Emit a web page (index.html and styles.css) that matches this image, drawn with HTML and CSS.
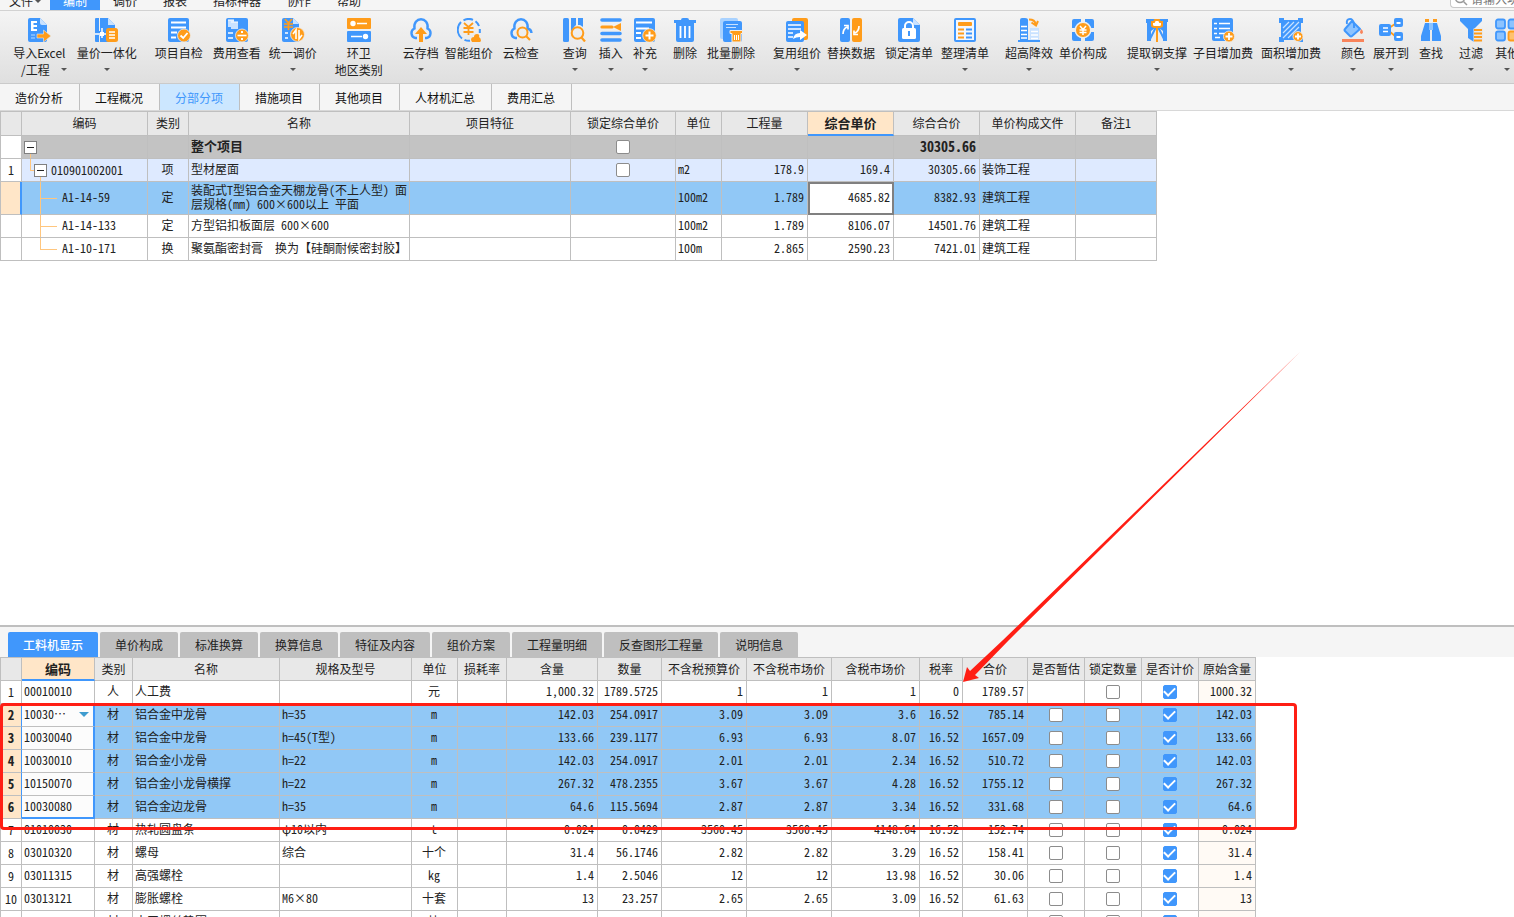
FILE: index.html
```html
<!DOCTYPE html>
<html lang="zh-CN">
<head>
<meta charset="utf-8">
<title>分部分项</title>
<link rel="stylesheet" href="styles.css">
</head>
<body>
<header class="menubar">
  <nav class="menu">
    <button class="menu-item file">文件<i class="caret"></i></button>
    <button class="menu-item active">编制</button>
    <button class="menu-item">调价</button>
    <button class="menu-item">报表</button>
    <button class="menu-item">指标神器</button>
    <button class="menu-item">协作</button>
    <button class="menu-item">帮助</button>
  </nav>
  <label class="search">
    <svg width="14" height="14" viewBox="0 0 14 14" fill="none" stroke="#999" stroke-width="1.5"><circle cx="6" cy="6" r="4.5"/><path d="M9.5 9.500l3.500 3.500"/></svg>
    <input type="text" placeholder="请输入功能名称" aria-label="搜索">
  </label>
</header>

<div class="ribbon">
  <button class="tool"><svg viewBox="0 0 24 24"><path class="b" d="M3 0h10l7 7v15q0 2-2 2H3q-2 0-2-2V2q0-2 2-2z"/><path fill="#c9e2ff" d="M13 0l7 7h-5q-2 0-2-2z"/><path class="w" d="M4 3h6v2H6.500v2H10v2H6.500v2H10v2H4z"/><path fill="none" stroke="#8cc3ff" stroke-width="1.500" d="M4 17h4M4 20h4"/><path fill="#ff9c1a" stroke="#e5e9ee" stroke-width=".6" d="M10 16h6.500v-4l7.500 6-7.500 6v-4H10z"/></svg><span>导入Excel</span><span class="second wide">/工程<i class="caret"></i></span></button>
  <button class="tool g10"><svg viewBox="0 0 24 24"><path class="b" d="M1 0h3v13h1V0h8l7 7v5h-5v12H5v-7H4v7H1q-1 0-1-1V1q0-1 1-1z"/><path fill="#c9e2ff" d="M13 0l7 7h-7z"/><path class="ws" stroke-width="1.500" d="M0 16h11M7 10v10"/><path class="w" d="M5 14h4v4H5z"/><rect class="o" x="11" y="10" width="12" height="14" rx="2.500"/><path class="ws" stroke-width="1.500" d="M14 14h6M14 17h6M14 20h6"/></svg><span>量价一体化</span><span class="second"><i class="caret"></i></span></button>
  <button class="tool g18"><svg viewBox="0 0 24 24"><rect class="b" x="1" width="21" height="24" rx="2"/><path class="ws" stroke-width="1.800" d="M4 4.500h15M4 9.500h15M4 14.500h6M4 19.500h5"/><circle class="o" cx="17" cy="17.500" r="6.500" stroke="#eee" stroke-width=".8"/><path class="ws" stroke-width="1.800" d="M13.500 17.500l2.700 2.500 4.300-5"/></svg><span>项目自检</span></button>
  <button class="tool g10"><svg viewBox="0 0 24 24"><rect class="b" x="1" width="22" height="24" rx="2"/><path fill="#c9e2ff" d="M3 2h6v2h4v7H6V9H3z"/><path class="ws" stroke-width="1" d="M3 2h6M6 4h7"/><path class="ws" stroke-width="1.600" d="M3 15h5M3 20h5"/><circle class="o" cx="17" cy="17.500" r="6.500" stroke="#eee" stroke-width=".8"/><path class="ws" stroke-width="1.600" d="M12.500 17.500h9"/><path class="w" d="M16 13h2v2h-2zM16 20h2v2h-2z"/></svg><span>费用查看</span></button>
  <button class="tool g8"><svg viewBox="0 0 24 24"><path class="b" d="M3 0h9l6 6v18H3q-2 0-2-2V2q0-2 2-2z"/><path fill="#c9e2ff" d="M12 0l6 6h-6z"/><path class="os" stroke-width="1.700" d="M4 1l3.500 4L11 1M3 6h9M3 9h9M7.500 5v7"/><path class="ws" stroke-width="1.500" d="M4 15h3M4 20h3"/><circle class="o" cx="16.500" cy="16.500" r="7" stroke="#eee" stroke-width=".8"/><path class="ws" stroke-width="1.600" d="M15 21v-9l-3 4M18 12v9l3-4"/></svg><span>统一调价</span><span class="second"><i class="caret"></i></span></button>
  <button class="tool g18"><svg viewBox="0 0 24 24"><rect class="o" width="24" height="11" rx="1"/><rect class="b" y="13" width="24" height="11" rx="1"/><circle class="w" cx="6" cy="5.500" r="2.700"/><circle class="w" cx="18.500" cy="18.500" r="2.700"/><path class="ws" stroke-width="1.600" d="M10 5.500h10M4 18.500h11"/></svg><span>环卫</span><span class="second">地区类别</span></button>
  <button class="tool g20"><svg viewBox="0 0 24 24"><path class="bs" stroke-width="2.400" d="M8 20H6.500A5 5 0 0 1 5.500 10.500C4.500 5 8 1.300 12 1.300S19.500 5 18.500 10.500A5 5 0 0 1 17.500 20H16"/><path class="o" d="M12 9l6 7h-4v8h-4v-8H6z"/></svg><span>云存档</span><span class="second"><i class="caret"></i></span></button>
  <button class="tool g6"><svg viewBox="0 0 24 24"><path class="bs" stroke-width="2" d="M5 20.500A11 11 0 0 1 4 4M6.500 2.300A11 11 0 0 1 16 1.800M18.500 3.200A11 11 0 0 1 22 8M22.800 11v4M7.500 21.800A11 11 0 0 0 13 22.800"/><path class="os" stroke-width="1.800" d="M7 5l4.500 4L16 5M6.500 10h10M6.500 14h10M11.500 9v8"/><path class="o" d="M14 22q0-3 3-3 0-3 3-3t2 3q2 1 2 4l-1 1h-8z"/></svg><span>智能组价</span></button>
  <button class="tool g10"><svg viewBox="0 0 24 24"><path class="bs" stroke-width="2.400" d="M8 20H6.500A5 5 0 0 1 5.500 10.500C4.500 5 8 1.300 12 1.300S19.500 5 18.500 10.500A5 5 0 0 1 22.500 15"/><circle class="os" cx="13.500" cy="14.500" r="5" stroke-width="2"/><path class="os" stroke-width="2.200" d="M17 18l4 4"/></svg><span>云检查</span></button>
  <button class="tool g24"><svg viewBox="0 0 24 24"><rect class="b" x="0" width="6" height="24" rx="1.500"/><path class="b" d="M8 0h5v7q-3 2-3 5l-2 1zM15 0h5v9l-3-2h-2z"/><circle class="os" cx="14.500" cy="15" r="5.800" stroke-width="2"/><path class="os" stroke-width="2.200" d="M18.500 19.500l3.500 4"/></svg><span>查询</span><span class="second"><i class="caret"></i></span></button>
  <button class="tool g12"><svg viewBox="0 0 24 24"><path class="bs" stroke-width="3.600" stroke-linecap="round" d="M3 2h18M3 15.500h18M3 22h18"/><path class="os" stroke-width="3.200" stroke-linecap="round" d="M3 9h10"/><path class="o" d="M22 5v8l-8-4z"/></svg><span>插入</span><span class="second"><i class="caret"></i></span></button>
  <button class="tool g10"><svg viewBox="0 0 24 24"><rect class="b" x="1" width="21" height="24" rx="2"/><path class="ws" stroke-width="1.800" d="M3 4.500h16M3 10.500h13M3 15h5M3 20h5"/><circle class="o" cx="16.500" cy="17.500" r="6.800" stroke="#eee" stroke-width=".8"/><path class="ws" stroke-width="2" d="M12.500 17.500h8M16.500 13.500v8"/></svg><span>补充</span><span class="second"><i class="caret"></i></span></button>
  <button class="tool g16"><svg viewBox="0 0 24 24"><path class="b" d="M1 2h7q0-2 2-2h4q2 0 2 2h7v3H1zM3 5h18v17q0 2-2 2H5q-2 0-2-2z"/><path class="ws" stroke-width="1.800" d="M7.500 8v12M12 8v12M16.500 8v12"/></svg><span>删除</span></button>
  <button class="tool g10"><svg viewBox="0 0 24 24"><rect fill="#a9d2ff" x="1" width="18" height="21" rx="2"/><rect class="b" x="4" y="3" width="19" height="21" rx="2"/><path fill="none" stroke="#c9e2ff" stroke-width="1.200" d="M7 6.500h12M7 9.500h10"/><path fill="#ff9c1a" stroke="#eee" stroke-width="1" d="M11 12.500h12.500v3H22v8.500H13v-8.500h-2z"/><path class="ws" stroke-width="1" d="M15.500 17v5M17.500 17v5M19.500 17v5"/></svg><span>批量删除</span><span class="second"><i class="caret"></i></span></button>
  <button class="tool g18"><svg viewBox="0 0 24 24"><rect class="o" x="7" width="16" height="22" rx="2"/><rect class="b" x="1" y="3" width="18" height="21" rx="2"/><path class="ws" stroke-width="1.600" d="M3 7h13M3 11h13M3 15h5M3 19h5"/><path class="w" d="M8 21q1-6 7-6v-3l7 5-7 5v-3q-4 0-7 2z"/></svg><span>复用组价</span><span class="second"><i class="caret"></i></span></button>
  <button class="tool g6"><svg viewBox="0 0 24 24"><rect class="b" x="1" width="10" height="24" rx="2"/><rect class="o" x="13" width="10" height="24" rx="2"/><path class="ws" stroke-width="1.700" d="M4 16q0-5 4-7M5 7.500h4v4M20 8q0 5-4 7M19 16.500h-4v-4"/></svg><span>替换数据</span></button>
  <button class="tool g10"><svg viewBox="0 0 24 24"><path class="b" d="M3 0h13l7 7v15q0 2-2 2H3q-2 0-2-2V2q0-2 2-2z"/><path fill="#c9e2ff" d="M16 0l7 7h-5q-2 0-2-2z"/><rect class="w" x="5" y="10" width="14" height="11" rx="1.500"/><path class="ws" stroke-width="2" d="M8 11V8a4 4 0 0 1 8 0v3"/><path class="b" d="M11 13h2v5h-2z"/></svg><span>锁定清单</span></button>
  <button class="tool g8"><svg viewBox="0 0 24 24"><rect class="b" x="1" width="22" height="24" rx="2"/><path fill="#f4f7fb" d="M3 2h18v20H3z"/><rect class="o" x="5" y="4" width="14" height="4" rx="1"/><path class="os" stroke-width="2" d="M5 11.500h6M5 15.500h6M5 19.500h6"/><path class="bs" stroke-width="2" d="M13 11.500h6M13 15.500h6M13 19.500h6"/></svg><span>整理清单</span><span class="second"><i class="caret"></i></span></button>
  <button class="tool g16"><svg viewBox="0 0 24 24"><path class="b" d="M3 22V2q0-2 2-2h3q3 0 3 2v20h12v2H1v-2z"/><path fill="#c9e2ff" d="M13 10h9v12h-9z"/><path class="ws" stroke-width="1.500" d="M4 8.500h6M4 12.500h6M4 16.500h6M4 20h6M14 13.500h7M14 17h7M14 20.500h7"/><path class="os" stroke-width="2" d="M12 1.500q6 0 6.500 4.500M14.500 4.500l4.500 3 2-4.500"/></svg><span>超高降效</span><span class="second"><i class="caret"></i></span></button>
  <button class="tool g6"><svg viewBox="0 0 24 24"><path class="b" d="M3 1h7v4h4V1h7q2 0 2 2v7h-4v4h4v7q0 2-2 2h-7v-4h-4v4H3q-2 0-2-2v-7h4v-4H1V3q0-2 2-2z"/><circle cx="12" cy="12" r="8.500" fill="#eee"/><circle class="o" cx="12" cy="12" r="7"/><path class="ws" stroke-width="1.500" d="M9 8l3 3.500L15 8M8.500 12h7M8.500 14.500h7M12 11v6"/></svg><span>单价构成</span></button>
  <button class="tool g20"><svg viewBox="0 0 24 24"><path class="b" d="M1 1h22v3h-1v19h-4V13l-4-3h-4l-4 3v10H2V5H1z"/><path class="bs" stroke-width="2" d="M11 9L5 21M13 9l6 12"/><path fill="#fff" stroke="#ff9c1a" stroke-width="2" d="M9 9L7 8V4h2l1-2h4l1 2h2v4l-2 1z"/><path class="os" stroke-width="2" d="M12 9v15"/></svg><span>提取钢支撑</span><span class="second"><i class="caret"></i></span></button>
  <button class="tool g6"><svg viewBox="0 0 24 24"><rect class="b" x="1" width="21" height="23" rx="2"/><path class="ws" stroke-width="1.600" d="M3 5.500h3M8 5.500h11M3 10.500h3M8 10.500h11M3 15.500h3M8 15.500h6M4 19.500h5"/><circle class="o" cx="18" cy="18.500" r="5.500" stroke="#eee" stroke-width=".8"/><path class="ws" stroke-width="1.800" d="M14.500 18.500h7M18 15v7"/></svg><span>子目增加费</span></button>
  <button class="tool g8"><svg viewBox="0 0 24 24"><path class="b" d="M0 0h5v2h14V0h5v5h-2v14h2v5h-5v-2H5v2H0v-5h2V5H0z"/><path fill="none" stroke="#c9e2ff" stroke-width="1.200" d="M4 10l6-6M4 15L15 4M4 20L20 4M9 20L20 9"/><circle class="o" cx="19" cy="18.500" r="5" stroke="#eee" stroke-width=".8"/><path class="ws" stroke-width="1.800" d="M16 18.500h6M19 15.500v6"/></svg><span>面积增加费</span><span class="second"><i class="caret"></i></span></button>
  <button class="tool g20"><svg viewBox="0 0 24 24"><path fill="#8cc3ff" stroke="#4097fc" stroke-width="2" stroke-linejoin="round" d="M11 3l8 8-8 7q-1 1-2 0l-5-5q-1-1 0-2z"/><path class="bs" stroke-width="2" d="M6 6q-1-5 3-5 3 0 4 5v4"/><path fill="#f9845b" d="M20.500 11q3 4 0 5-3-1 0-5zM1 21h22v3H1z"/></svg><span>颜色</span><span class="second"><i class="caret"></i></span></button>
  <button class="tool g8"><svg viewBox="0 0 24 24"><path class="os" stroke-width="1.800" d="M10 10l6-4M10 13l6 5"/><rect class="b" y="6" width="12" height="12" rx="2"/><path class="ws" stroke-width="1.500" d="M4 10h5M4 13.500h5"/><rect class="b" x="15" width="9" height="9" rx="2"/><rect class="b" x="15" y="14" width="9" height="9" rx="2"/><path class="ws" stroke-width="2" d="M17.500 5h4M17.500 19h4"/></svg><span>展开到</span><span class="second"><i class="caret"></i></span></button>
  <button class="tool g10"><svg viewBox="0 0 24 24"><path class="b" d="M6 5h4l1 7v11H2v-5zM14 5h4l4 13v5h-9V12z"/><path fill="#8cc3ff" d="M10 5h4v7h-4z"/><path class="o" d="M6 1h4v3H6zM14 1h4v3h-4z"/></svg><span>查找</span></button>
  <button class="tool g16"><svg viewBox="0 0 24 24"><path class="b" d="M1 0h22v3l-8 8v13l-6-4v-9L1 3z"/><path fill="#e8e8e8" d="M14.500 10.500H24V24h-9.500z"/><path class="os" stroke-width="1.800" d="M15 12h8M15 15.500h8M15 19h8M15 22.500h8"/></svg><span>过滤</span><span class="second"><i class="caret"></i></span></button>
  <button class="tool g12"><svg viewBox="0 0 24 24"><g fill="#8cc3ff" stroke="#4097fc" stroke-width="1.800"><rect x="1" y="1.500" width="9" height="9" rx="2"/><rect x="13.500" y="1.500" width="9" height="9" rx="2"/><rect x="1" y="13.500" width="9" height="9" rx="2"/></g><rect fill="#ffc26e" stroke="#ff9c1a" stroke-width="1.800" x="13.500" y="13.500" width="9" height="9" rx="2"/></svg><span>其他</span><span class="second"><i class="caret"></i></span></button>
</div>

<nav class="pages">
  <button>造价分析</button><button>工程概况</button><button class="active">分部分项</button><button>措施项目</button><button>其他项目</button><button>人材机汇总</button><button>费用汇总</button>
</nav>

<main class="upper">
  <table class="grid" id="bill"></table>
</main>

<section class="lower">
  <nav class="tabs">
    <button class="active">工料机显示</button><button>单价构成</button><button>标准换算</button><button>换算信息</button><button>特征及内容</button><button>组价方案</button><button>工程量明细</button><button>反查图形工程量</button><button>说明信息</button>
  </nav>
  <div class="lower-body">
    <table class="grid" id="resources"></table>
    <div class="mark"></div>
  </div>
  <svg class="arrow" width="340" height="334" viewBox="0 0 340 334"><path fill="#ff1e14" d="M338 2L47 290 13 325l4 3-16 4 4-15 3 4 33-31z"/></svg>
</section>
<script src="tables.js"></script>
</body>
</html>
```
FILE: styles.css
```css
* { box-sizing: border-box; }
:root {
  --blue: #4097fc;
  --orange: #ff9c1a;
  --line: #bfbfbf;
  --select: #91c8f6;
  --peach: #ffe6c8;
  --tree: #ffc67e;
}
body {
  margin: 0;
  height: 100vh;
  display: flex;
  flex-direction: column;
  overflow: hidden;
  background: #fff;
  color: #222;
  font: 12px/16px "Noto Sans CJK SC", sans-serif;
}
button {
  border: 0;
  padding: 0;
  background: none;
  color: inherit;
  font: inherit;
  white-space: nowrap;
}

.menubar {
  flex: none;
  display: flex;
  align-items: flex-end;
  justify-content: space-between;
  height: 11px;
  overflow: hidden;
  background: #f5f5f5;
  border-bottom: 1px solid #d2d2d2;
}
.menu { display: flex; }
.menu-item { height: 28px; padding: 11px 13px 1px; }
.menu-item.file { width: 50px; padding: 11px 9px 1px; display: flex; align-items: center; gap: 2px; }
.menu-item.active { background: var(--blue); color: #fff; }
.search {
  display: flex;
  align-items: center;
  gap: 3px;
  width: 64px;
  height: 18px;
  margin-bottom: 2px;
  padding: 0 0 0 3px;
  border: 1px solid #c8c8c8;
  border-right: 0;
  border-radius: 4px 0 0 4px;
  background: #fff;
}
.search svg { flex: none; }
.search input { width: 100%; min-width: 0; border: 0; padding: 0; outline: 0; font: inherit; }
.search input::placeholder { color: #777; }

.caret {
  flex: none;
  width: 0;
  height: 0;
  border: 3px solid transparent;
  border-top-color: #555;
  border-bottom: 0;
}

.ribbon {
  flex: none;
  display: flex;
  align-items: flex-start;
  padding: 7px 0 5px 12px;
  overflow: hidden;
  background: linear-gradient(#f4f4f4, #dfdfdf);
  border-bottom: 1px solid #cacaca;
}
.tool {
  flex: none;
  display: flex;
  flex-direction: column;
  align-items: center;
  line-height: 17px;
}
.tool svg { width: 24px; height: 24px; margin-bottom: 2px; }
.second { display: flex; align-items: center; justify-content: center; height: 17px; }
.second.wide { gap: 11px; padding-left: 9px; }
.g6 { margin-left: 6px; }
.g8 { margin-left: 8px; }
.g10 { margin-left: 10px; }
.g12 { margin-left: 12px; }
.g16 { margin-left: 16px; }
.g18 { margin-left: 18px; }
.g20 { margin-left: 20px; }
.g24 { margin-left: 24px; }
.b { fill: var(--blue); }
.o { fill: var(--orange); }
.w { fill: #fff; }
.bs, .os, .ws { fill: none; }
.bs { stroke: var(--blue); }
.os { stroke: var(--orange); }
.ws { stroke: #fff; }

.pages {
  flex: none;
  display: flex;
  height: 27px;
  background: #f5f5f5;
  border-bottom: 1px solid #d8d8d8;
}
.pages button { padding: 2px 16px 0 15px; border-right: 1px solid var(--line); color: #111; }
.pages .active { background: #cce7ff; color: var(--blue); }

.upper { flex: 1; min-height: 0; overflow: hidden; }

.grid {
  table-layout: fixed;
  width: 0;
  border-spacing: 0;
  border: 0 solid var(--line);
  border-width: 1px 0 0 1px;
  font-family: "Noto Sans Mono CJK SC", "Noto Sans CJK SC", monospace;
  line-height: 14px;
}
.grid th, .grid td {
  height: 23px;
  padding: 0 3px 2px 2px;
  border: 0 solid var(--line);
  border-width: 0 1px 1px 0;
  text-align: left;
  white-space: nowrap;
  overflow: hidden;
}
.grid td:has(input) { padding-bottom: 0; }
.grid thead th {
  padding: 0;
  background: #e8e8e8;
  font-weight: 400;
  text-align: center;
}
.grid tbody th { padding: 0; background: #fff; font-weight: 400; text-align: center; }
.grid .num { text-align: right; }
.grid .mid { text-align: center; }
.grid thead .current {
  background: var(--peach);
  border-bottom: 2px solid var(--blue);
  font-size: 13px;
  font-weight: 700;
}
.grid input {
  appearance: none;
  display: block;
  width: 14px;
  height: 14px;
  margin: 0 auto;
  border: 1px solid #8c8c8c;
  border-radius: 2px;
  background: #fff;
}
.grid input:checked {
  border-color: var(--blue);
  background: var(--blue);
  display: grid;
  place-items: center;
}
.grid input:checked::before {
  content: "";
  width: 9px;
  height: 5px;
  margin-bottom: 3px;
  border: solid #fff;
  border-width: 0 0 2px 2px;
  rotate: -45deg;
}
.selected td { background-color: var(--select); }

#bill thead th { height: 24px; padding-bottom: 2px; }
#bill thead .current { padding-bottom: 1px; }
#bill .total td { background-color: #c3c3c3; font-size: 13px; font-weight: 700; }
#bill .total .num { font-size: 14px; }
#bill .item td { background-color: #deeaff; }
#bill .selected td { height: 33px; }
#bill .selected th { background: var(--peach); border-right: 2px solid var(--blue); }
#bill .selected .editing { background: #fff; outline: 2px solid #808080; outline-offset: -2px; }
#bill td { background-repeat: no-repeat; }
#bill .root {
  padding: 0 0 0 2px;
  background-image: linear-gradient(var(--tree), var(--tree));
  background-size: 1px 6px;
  background-position: 8px 100%;
}
#bill .branch {
  padding: 0 0 0 12px;
  background-image: linear-gradient(var(--tree), var(--tree)), linear-gradient(var(--tree), var(--tree)), linear-gradient(var(--tree), var(--tree));
  background-size: 1px 11px, 5px 1px, 1px 6px;
  background-position: 8px 0, 8px 50%, 18px 100%;
}
#bill .leaf {
  padding-left: 40px;
  background-image: linear-gradient(var(--tree), var(--tree)), linear-gradient(var(--tree), var(--tree));
  background-size: 1px 100%, 17px 1px;
  background-position: 18px 0, 18px 50%;
}
#bill .leaf.last { background-size: 1px 50%, 17px 1px; }
.node { display: flex; align-items: center; gap: 4px; }
.toggle {
  display: grid;
  place-items: center;
  width: 13px;
  height: 13px;
  border: 1px solid #808080;
  background: #fff;
}
.toggle::before { content: ""; width: 7px; height: 1px; background: #222; }

.lower {
  flex: 0 0 292px;
  min-height: 0;
  display: flex;
  flex-direction: column;
  position: relative;
  border-top: 2px solid var(--line);
}
.tabs {
  flex: none;
  display: flex;
  gap: 2px;
  padding: 5px 8px 0;
  background: #f5f5f5;
}
.tabs button {
  height: 25px;
  padding: 0 15px;
  border-radius: 2px 2px 0 0;
  background: #bfbfbf;
}
.tabs .active { background: var(--blue); color: #fff; font-weight: 500; }
.lower-body { flex: 1; min-height: 0; overflow: hidden; position: relative; }
#resources .origin { background: #fffaf5; }
#resources thead .origin { background: #e8e8e8; }
#resources .selected .origin { background: var(--select); }
#resources .selected th {
  background: var(--peach);
  border-right-color: var(--blue);
  font-size: 13px;
  font-weight: 700;
}
#resources .selected .code { background: #fcfcfc; border-right: 2px solid var(--blue); }
#resources .selected.end .code { border-bottom: 2px solid var(--blue); }
.picker { display: flex; align-items: center; }
.picker select {
  flex: 1;
  min-width: 0;
  appearance: none;
  border: 0;
  padding: 0;
  background: none;
  color: inherit;
  font: inherit;
}
.picker .caret { border-width: 5px 5px 0; border-top-color: #3f9ccf; margin-right: 1px; }
.mark {
  position: absolute;
  top: 46px;
  left: 0;
  width: 1297px;
  height: 127px;
  border: 3px solid #ff1e14;
  border-radius: 4px;
  pointer-events: none;
}
.arrow { position: absolute; left: 962px; bottom: 233px; pointer-events: none; }
```
FILE: tables.js
```js
const box = (label, checked) =>
  `<input type="checkbox" aria-label="${label}"${checked ? " checked" : ""}>`;

function head(columns) {
  const cols = columns.map(([, width]) => `<col style="width:${width}px">`).join("");
  const cells = columns
    .map(([name, , , current]) => `<th scope="col"${current ? ' class="current"' : ""}>${name}</th>`)
    .join("");
  return `<colgroup>${cols}</colgroup><thead><tr>${cells}</tr></thead>`;
}

// name, width, cell class, current column
const billColumns = [
  ["", 21], ["编码", 126], ["类别", 41, "mid"], ["名称", 221], ["项目特征", 161],
  ["锁定综合单价", 105, "mid"], ["单位", 46], ["工程量", 86, "num"],
  ["综合单价", 86, "num", true], ["综合合价", 86, "num"], ["单价构成文件", 96], ["备注1", 81],
];
const toggle = '<button class="toggle" aria-label="折叠"></button>';
const lock = box("锁定综合单价");
const billRows = [
  ["total", "root", "", `<div class="node">${toggle}</div>`, "", "整个项目", "", lock, "", "", "", "30305.66", "", ""],
  ["item", "branch", "1", `<div class="node">${toggle}010901002001</div>`, "项", "型材屋面", "", lock, "m2", "178.9", "169.4", "30305.66", "装饰工程", ""],
  ["selected", "leaf", "", "A1-14-59", "定", "装配式T型铝合金天棚龙骨(不上人型) 面<br>层规格(mm) 600×600以上 平面", "", "", "100m2", "1.789", "4685.82", "8382.93", "建筑工程", ""],
  ["", "leaf", "", "A1-14-133", "定", "方型铝扣板面层 600×600", "", "", "100m2", "1.789", "8106.07", "14501.76", "建筑工程", ""],
  ["", "leaf last", "", "A1-10-171", "换", "聚氨酯密封膏　换为【硅酮耐候密封胶】", "", "", "100m", "2.865", "2590.23", "7421.01", "建筑工程", ""],
];
document.getElementById("bill").innerHTML = head(billColumns) + "<tbody>" +
  billRows.map(([rowClass, tree, ...cells]) => `<tr class="${rowClass}">` + cells.map((text, i) => {
    if (i === 0) return `<th scope="row">${text}</th>`;
    let cls = i === 1 ? tree : billColumns[i][2] || "";
    if (rowClass === "selected" && i === 8) cls += " editing";
    return `<td class="${cls}">${text}</td>`;
  }).join("") + "</tr>").join("") + "</tbody>";

const resourceColumns = [
  ["", 21], ["编码", 73, "code", true], ["类别", 38, "mid"], ["名称", 147], ["规格及型号", 132],
  ["单位", 46, "mid"], ["损耗率", 49], ["含量", 91, "num"], ["数量", 64, "num"],
  ["不含税预算价", 85, "num"], ["不含税市场价", 85, "num"], ["含税市场价", 88, "num"],
  ["税率", 43, "num"], ["合价", 65, "num"], ["是否暂估", 57, "mid"], ["锁定数量", 57, "mid"],
  ["是否计价", 57, "mid"], ["原始含量", 57, "num origin"],
];
const picker = '<div class="picker"><select aria-label="编码"><option>10030…</option></select><i class="caret"></i></div>';
// code, kind, name, spec, unit, content, quantity, budget, market, taxed, rate, total, original
const resources = [
  ["00010010", "人", "人工费", "", "元", "1,000.32", "1789.5725", "1", "1", "1", "0", "1789.57", "1000.32"],
  [picker, "材", "铝合金中龙骨", "h=35", "m", "142.03", "254.0917", "3.09", "3.09", "3.6", "16.52", "785.14", "142.03"],
  ["10030040", "材", "铝合金中龙骨", "h=45(T型)", "m", "133.66", "239.1177", "6.93", "6.93", "8.07", "16.52", "1657.09", "133.66"],
  ["10030010", "材", "铝合金小龙骨", "h=22", "m", "142.03", "254.0917", "2.01", "2.01", "2.34", "16.52", "510.72", "142.03"],
  ["10150070", "材", "铝合金小龙骨横撑", "h=22", "m", "267.32", "478.2355", "3.67", "3.67", "4.28", "16.52", "1755.12", "267.32"],
  ["10030080", "材", "铝合金边龙骨", "h=35", "m", "64.6", "115.5694", "2.87", "2.87", "3.34", "16.52", "331.68", "64.6"],
  ["01010030", "材", "热轧圆盘条", "φ10以内", "t", "0.024", "0.0429", "3560.45", "3560.45", "4148.64", "16.52", "152.74", "0.024"],
  ["03010320", "材", "螺母", "综合", "十个", "31.4", "56.1746", "2.82", "2.82", "3.29", "16.52", "158.41", "31.4"],
  ["03011315", "材", "高强螺栓", "", "kg", "1.4", "2.5046", "12", "12", "13.98", "16.52", "30.06", "1.4"],
  ["03013121", "材", "膨胀螺栓", "M6×80", "十套", "13", "23.257", "2.65", "2.65", "3.09", "16.52", "61.63", "13"],
  ["", "材", "木工螺丝垫圈", "", "块", "", "", "", "", "", "", "", ""],
];
document.getElementById("resources").innerHTML = head(resourceColumns) + "<tbody>" +
  resources.map((row, r) => {
    const selected = r >= 1 && r <= 5;
    const cells = [
      ...row.slice(0, 5), "", ...row.slice(5, 12),
      r === 0 ? "" : box("是否暂估"), box("锁定数量"), box("是否计价", true), row[12],
    ];
    return `<tr class="${selected ? "selected" : ""}${r === 5 ? " end" : ""}"><th scope="row">${r < 10 ? r + 1 : ""}</th>` +
      cells.map((text, i) => `<td class="${resourceColumns[i + 1][2] || ""}">${text}</td>`).join("") + "</tr>";
  }).join("") + "</tbody>";
```
